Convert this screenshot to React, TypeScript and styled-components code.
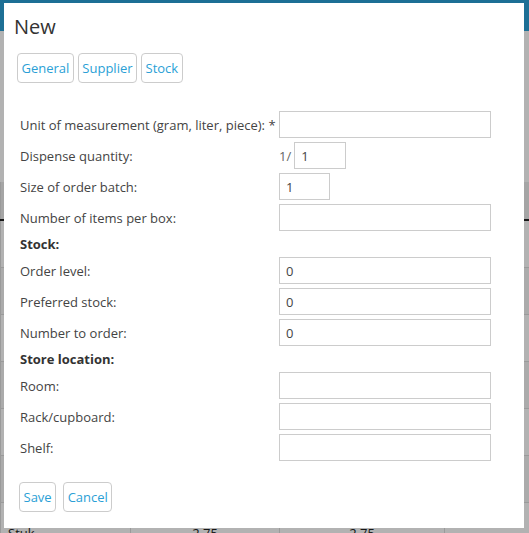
import * as React from 'react'
import styled, {createGlobalStyle} from 'styled-components'

const GlobalStyle = createGlobalStyle`
  html, body {
    margin: 0;
    padding: 0;
    background: #ffffff;
    font-family: 'Open Sans', 'DejaVu Sans', sans-serif;
    font-size: 13px;
    color: #444;
    overflow: hidden;
  }
  * {
    box-sizing: border-box;
  }
`

// ---- page behind the dialog ----

const Page = styled.div`
  width: 529px;
  height: 533px;
  overflow: hidden;
`

const TopBar = styled.div`
  height: 31px;
  background: #2a9fd6;
`

const Table = styled.table`
  margin-top: 151px;
  width: 529px;
  border-collapse: collapse;
  table-layout: fixed;
`

const HeadCell = styled.th<{$w?: number}>`
  width: ${p => (p.$w ? `${p.$w}px` : 'auto')};
  height: 38px;
  padding: 0 4px;
  background: #ececec;
  border-bottom: 2px solid #222;
  border-left: 1px solid #ddd;
`

const Row = styled.tr<{$odd?: boolean}>`
  background: ${p => (p.$odd ? '#f5f5f5' : '#ffffff')};
`

const Cell = styled.td<{$center?: boolean}>`
  height: 47px;
  padding: 21px 7px 0;
  vertical-align: top;
  border-bottom: 1px solid #ddd;
  border-left: 1px solid #ddd;
  text-align: ${p => (p.$center ? 'center' : 'left')};
  color: #222;
  white-space: nowrap;
  overflow: hidden;
`

const Overlay = styled.div`
  position: fixed;
  inset: 0;
  background: rgba(0, 0, 0, 0.3);
`

// ---- dialog ----

const Dialog = styled.div`
  position: fixed;
  top: 3px;
  left: 4px;
  width: 520px;
  height: 525px;
  background: #ffffff;
  padding: 12px 10px 0;
  display: flex;
  flex-direction: column;
`

const Title = styled.h2`
  margin: 0;
  font-size: 20px;
  line-height: 24px;
  font-weight: 400;
  color: #333;
`

const Tabs = styled.div`
  display: flex;
  gap: 4px;
  margin: 14px 0 0 3px;
`

const Button = styled.button`
  height: 30px;
  padding: 0 3.5px;
  background: #ffffff;
  border: 1px solid #ccc;
  border-radius: 4px;
  font-family: 'Open Sans', 'DejaVu Sans', sans-serif;
  font-size: 13px;
  color: #2a9fd6;
  cursor: pointer;
`

const Form = styled.div`
  display: grid;
  grid-template-columns: 259px 212px;
  row-gap: 4px;
  align-items: center;
  margin: 28px 0 0 6px;
`

const Label = styled.label`
  font-size: 13px;
  line-height: 18px;
  color: #444;
  white-space: nowrap;
`

const Heading = styled.div`
  grid-column: 1 / 3;
  font-size: 13px;
  line-height: 18px;
  font-weight: 700;
  color: #333;
`

const Input = styled.input<{$w?: number}>`
  width: ${p => (p.$w ? `${p.$w}px` : '212px')};
  height: 27px;
  padding: 0 6px;
  border: 1px solid #ccc;
  border-radius: 0;
  font-family: 'Open Sans', 'DejaVu Sans', sans-serif;
  font-size: 13px;
  color: #444;
  background: #ffffff;
  outline: none;
`

const Ratio = styled.div`
  display: flex;
  align-items: center;
  gap: 3px;
  color: #666;
`

const Footer = styled.div`
  display: flex;
  gap: 7px;
  margin: 21px 0 0 5px;
`

type Field = {label: string; value?: string; required?: boolean; width?: number; ratio?: boolean}

const general: Field[] = [
  {label: 'Unit of measurement (gram, liter, piece):', required: true},
  {label: 'Dispense quantity:', value: '1', ratio: true, width: 52},
  {label: 'Size of order batch:', value: '1', width: 51},
  {label: 'Number of items per box:'},
]

const stock: Field[] = [
  {label: 'Order level:', value: '0'},
  {label: 'Preferred stock:', value: '0'},
  {label: 'Number to order:', value: '0'},
]

const location: Field[] = [
  {label: 'Room:'},
  {label: 'Rack/cupboard:'},
  {label: 'Shelf:'},
]

const FieldRow = ({field}: {field: Field}) => (
  <>
    <Label>
      {field.label}
      {field.required && ' *'}
    </Label>
    {field.ratio ? (
      <Ratio>
        <span>1/</span>
        <Input $w={field.width} defaultValue={field.value} />
      </Ratio>
    ) : (
      <div>
        <Input $w={field.width} defaultValue={field.value} />
      </div>
    )}
  </>
)

// rows behind the dialog: only the last one peeks out below it
const rows = [
  ['', '', '', ''],
  ['', '', '', ''],
  ['', '', '', ''],
  ['', '', '', ''],
  ['', '', '', ''],
  ['', '', '', ''],
  ['Stuk', '2,75', '2,75', ''],
]

export default function App() {
  return (
    <>
      <GlobalStyle />
      <Page>
        <TopBar />
        <Table>
          <thead>
            <tr>
              <HeadCell $w={130} />
              <HeadCell $w={149} />
              <HeadCell $w={165} />
              <HeadCell />
            </tr>
          </thead>
          <tbody>
            {rows.map((r, i) => (
              <Row key={i} $odd={i % 2 === 1}>
                <Cell>{r[0]}</Cell>
                <Cell $center>{r[1]}</Cell>
                <Cell $center>{r[2]}</Cell>
                <Cell $center>{r[3]}</Cell>
              </Row>
            ))}
          </tbody>
        </Table>
      </Page>
      <Overlay />
      <Dialog>
        <Title>New</Title>
        <Tabs>
          <Button>General</Button>
          <Button>Supplier</Button>
          <Button>Stock</Button>
        </Tabs>
        <Form>
          {general.map(f => <FieldRow key={f.label} field={f} />)}
          <Heading>Stock:</Heading>
          {stock.map(f => <FieldRow key={f.label} field={f} />)}
          <Heading>Store location:</Heading>
          {location.map(f => <FieldRow key={f.label} field={f} />)}
        </Form>
        <Footer>
          <Button>Save</Button>
          <Button>Cancel</Button>
        </Footer>
      </Dialog>
    </>
  )
}
